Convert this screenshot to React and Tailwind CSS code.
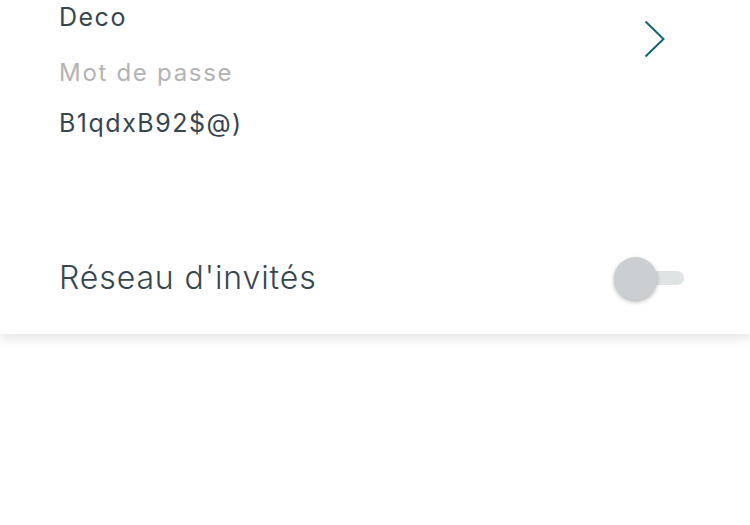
export default function App() {
  return (
    <div className="w-[750px] h-[525px] bg-white overflow-hidden" style={{ fontFamily: "Inter, 'Noto Sans', sans-serif" }}>
      <div className="relative bg-white h-[334px] shadow-[0_5px_10px_rgba(0,0,0,0.10)] flex flex-col">
        <div className="flex flex-row items-start justify-between pl-[59px] pr-[84px]">
          <div className="flex flex-col">
            <div className="text-[25px] leading-[34px] tracking-[1.5px] text-[#37464e]">Deco</div>
            <div className="mt-[21px] text-[24px] leading-[36px] tracking-[1.7px] text-[#b3b3b3]">Mot de passe</div>
            <div className="mt-[14px] text-[25px] leading-[36px] tracking-[1.5px] text-[#37464e]">B1qdxB92$@)</div>
          </div>
          <svg className="mt-[20px]" width="22" height="38" viewBox="0 0 22 38" fill="none">
            <path d="M1.5 1.5 L19.5 19 L1.5 36.5" stroke="#0f6572" strokeWidth="2" />
          </svg>
        </div>
        <div className="mt-[115px] flex flex-row items-center justify-between pl-[59px] pr-[66px] h-[44px]">
          <div className="text-[32px] leading-[44px] tracking-[0.9px] font-light text-[#37464e]">Réseau d'invités</div>
          <div className="relative w-[70px] h-[44px] flex items-center">
            <div className="ml-[6px] w-[64px] h-[14px] rounded-full bg-[#dfe3e4]" />
            <div className="absolute left-0 top-[1px] w-[43px] h-[43px] rounded-full bg-[#cbcfd1] shadow-[0_2px_4px_rgba(0,0,0,0.3)]" />
          </div>
        </div>
      </div>
    </div>
  );
}
